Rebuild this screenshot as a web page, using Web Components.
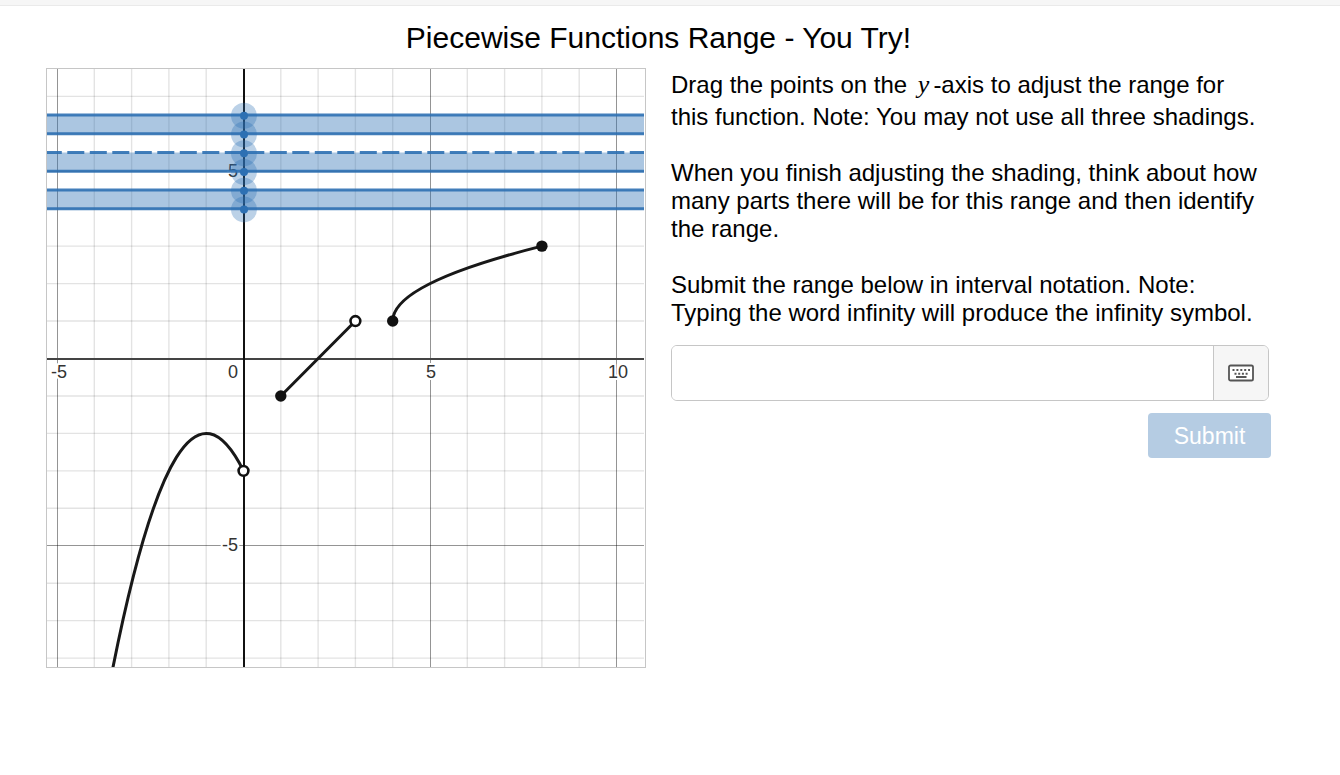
<!DOCTYPE html>
<html lang="en">
<head>
<meta charset="utf-8">
<meta name="viewport" content="width=device-width, initial-scale=1">
<title>Piecewise Functions Range - You Try!</title>
<style>
  body { margin: 0; background: #fff; color: #000; font-family: "Liberation Sans", Arial, sans-serif; }
</style>
</head>
<body>
<activity-page>
  <span slot="title">Piecewise Functions Range - You Try!</span>
  <function-graph slot="graph"></function-graph>
  <activity-note slot="note"></activity-note>
  <answer-form slot="note"></answer-form>
</activity-page>

<script>
class ActivityPage extends HTMLElement {
  constructor() {
    super();
    this.attachShadow({ mode: "open" }).innerHTML = `
      <style>
        :host { display: block; }
        .strip { height: 5px; background: #f6f6f6; border-bottom: 1px solid #eaeaea; }
        main { padding: 12px 69px 24px 46px; }
        h1 { margin: 0 0 10px; font-size: 30px; line-height: 40px; font-weight: 400; text-align: center; }
        .columns { display: grid; grid-template-columns: minmax(0, 1fr) minmax(0, 1fr); gap: 25px; align-items: start; }
      </style>
      <div class="strip"></div>
      <main>
        <h1><slot name="title"></slot></h1>
        <div class="columns">
          <slot name="graph"></slot>
          <div><slot name="note"></slot></div>
        </div>
      </main>`;
  }
}

class FunctionGraph extends HTMLElement {
  constructor() {
    super();
    const ux = 37.3, uy = 37.45, ox = 196.5, oy = 289.5;
    const X = x => +(ox + x * ux).toFixed(2);
    const Y = y => +(oy - y * uy).toFixed(2);
    const W = 597, H = 598;
    let grid = "";
    for (let i = -5; i <= 11; i++) {
      if (i === 0) continue;
      const major = i % 5 === 0;
      const x = major ? Math.floor(X(i)) + 0.5 : X(i);
      grid += `<path class="${major ? "major" : "minor"}" d="M${x} 0V${H}"/>`;
    }
    for (let i = -8; i <= 7; i++) {
      if (i === 0) continue;
      const major = i % 5 === 0;
      const y = major ? Math.floor(Y(i)) + 0.5 : Y(i);
      grid += `<path class="${major ? "major" : "minor"}" d="M0 ${y}H${W}"/>`;
    }
    const bands = [[6.5, 6, ""], [5.5, 5, "dash"], [4.5, 4, ""]].map(([a, b, c]) => `
      <rect class="band" x="0" y="${Y(a)}" width="${W}" height="${Y(b) - Y(a)}"/>
      <path class="edge ${c}" d="M0 ${Y(a)}H${W}"/>
      <path class="edge" d="M0 ${Y(b)}H${W}"/>`).join("");
    const handles = [6.5, 6, 5.5, 5, 4.5, 4].map(y => `
      <circle class="halo" cx="197" cy="${Y(y) + 0.7}" r="13"/>
      <circle class="knob" cx="197" cy="${Y(y) + 0.7}" r="4"/>`).join("");
    const closed = [[1, -1], [4, 1], [8, 3]].map(([x, y]) => `<circle class="closed" cx="${X(x)}" cy="${Y(y)}" r="5.7"/>`).join("");
    const open = [[0, -3], [3, 1]].map(([x, y]) => `<circle class="open" cx="${X(x)}" cy="${Y(y)}" r="4.9"/>`).join("");
    this.attachShadow({ mode: "open" }).innerHTML = `
      <style>
        :host { display: block; box-sizing: border-box; border: 1px solid #c6c6c6; aspect-ratio: 1; }
        svg { display: block; width: 100%; height: auto; }
        path { fill: none; }
        .minor { stroke: #000; stroke-opacity: .11; stroke-width: 1.4; }
        .major { stroke: #000; stroke-opacity: .42; }
        .axis-x { stroke: #444; stroke-width: 2; }
        .axis-y { stroke: #111; stroke-width: 2; }
        text { font-size: 18px; fill: #333; stroke: #fff; stroke-width: 4px; stroke-linejoin: round; paint-order: stroke; }
        .band { fill: #2d70b3; fill-opacity: .4; }
        .edge { stroke: #2d70b3; stroke-width: 3; stroke-opacity: .9; }
        .dash { stroke-dasharray: 17 5.5; stroke-dashoffset: 2.2; }
        .halo { fill: #2d70b3; fill-opacity: .32; }
        .knob { fill: #2d70b3; }
        .curve { stroke: #181818; stroke-width: 3; stroke-linecap: round; }
        .closed { fill: #111; }
        .open { fill: #fff; stroke: #111; stroke-width: 2.6; }
      </style>
      <svg viewBox="0 0 598 598" role="img" aria-label="Graph of a piecewise function with three shaded bands">
        ${grid}
        <path class="axis-x" d="M0 290H${W}"/>
        <path class="axis-y" d="M197 0V${H}"/>
        <text x="4" y="309">-5</text>
        <text x="181" y="309">0</text>
        <text x="379" y="309">5</text>
        <text x="561" y="309">10</text>
        <text x="181" y="108">5</text>
        <text x="175" y="482">-5</text>
        ${bands}
        <path class="curve" d="M${X(-3.6)} ${Y(-8.76)}Q${X(-1.8)} ${Y(0.6)} ${X(0)} ${Y(-3)}"/>
        <path class="curve" d="M${X(1)} ${Y(-1)}L${X(3)} ${Y(1)}"/>
        <path class="curve" d="M${X(4)} ${Y(1)}Q${X(4)} ${Y(2)} ${X(8)} ${Y(3)}"/>
        ${closed}${open}${handles}
      </svg>`;
  }
}

class ActivityNote extends HTMLElement {
  constructor() {
    super();
    this.attachShadow({ mode: "open" }).innerHTML = `
      <style>
        :host { display: block; padding-top: 1px; font-size: 24px; line-height: 28px; }
        p { margin: 0 0 28px; }
        p:last-child { margin-bottom: 0; }
        .lead { line-height: 32px; margin-bottom: 26px; }
        .var { font-family: "Liberation Serif", "Times New Roman", serif; font-size: 26px; line-height: 28px; font-style: italic; padding: 0 4px; }
      </style>
      <p class="lead">Drag the points on the <span class="var">y</span>-axis to adjust the range for<br>this function. Note: You may not use all three shadings.</p>
      <p>When you finish adjusting the shading, think about how<br>many parts there will be for this range and then identify<br>the range.</p>
      <p>Submit the range below in interval notation. Note:<br>Typing the word infinity will produce the infinity symbol.</p>`;
  }
}

class AnswerForm extends HTMLElement {
  constructor() {
    super();
    this.attachShadow({ mode: "open" }).innerHTML = `
      <style>
        :host { display: block; padding-top: 18px; }
        form { margin: 0; }
        .field { display: flex; height: 54px; margin-right: 2px; border: 1px solid #c6c6c6; border-radius: 6px; overflow: hidden; }
        input { flex: 1; min-width: 0; border: 0; padding: 0 12px; background: #fff; font: 24px "Liberation Sans", Arial, sans-serif; outline: none; }
        button { border: 0; padding: 0; font-family: inherit; }
        .keys { display: flex; align-items: center; justify-content: center; width: 55px; background: #f6f6f6; border-left: 1px solid #c6c6c6; }
        .row { display: flex; justify-content: flex-end; margin-top: 12px; }
        .submit { width: 123px; height: 45px; border-radius: 4px; background: #b5cce3; color: #fff; font-size: 23px; line-height: 28px; }
      </style>
      <form>
        <div class="field">
          <input type="text" aria-label="Range in interval notation">
          <button class="keys" type="button" aria-label="Open keypad">
            <svg width="26" height="18" viewBox="0 0 26 18" fill="none" stroke="#555">
              <rect x="1" y="1.500" width="24" height="15" rx="1.6" stroke-width="1.8" fill="#fff"/>
              <path d="M4.500 6H22" stroke-width="2" stroke-dasharray="2 1.9"/>
              <path d="M6.500 9.700H20.500" stroke-width="2" stroke-dasharray="2 1.7"/>
              <path d="M8 13H18.500" stroke-width="1.8"/>
            </svg>
          </button>
        </div>
        <div class="row"><button class="submit" type="button">Submit</button></div>
      </form>`;
  }
}

customElements.define("activity-page", ActivityPage);
customElements.define("function-graph", FunctionGraph);
customElements.define("activity-note", ActivityNote);
customElements.define("answer-form", AnswerForm);
</script>
</body>
</html>
